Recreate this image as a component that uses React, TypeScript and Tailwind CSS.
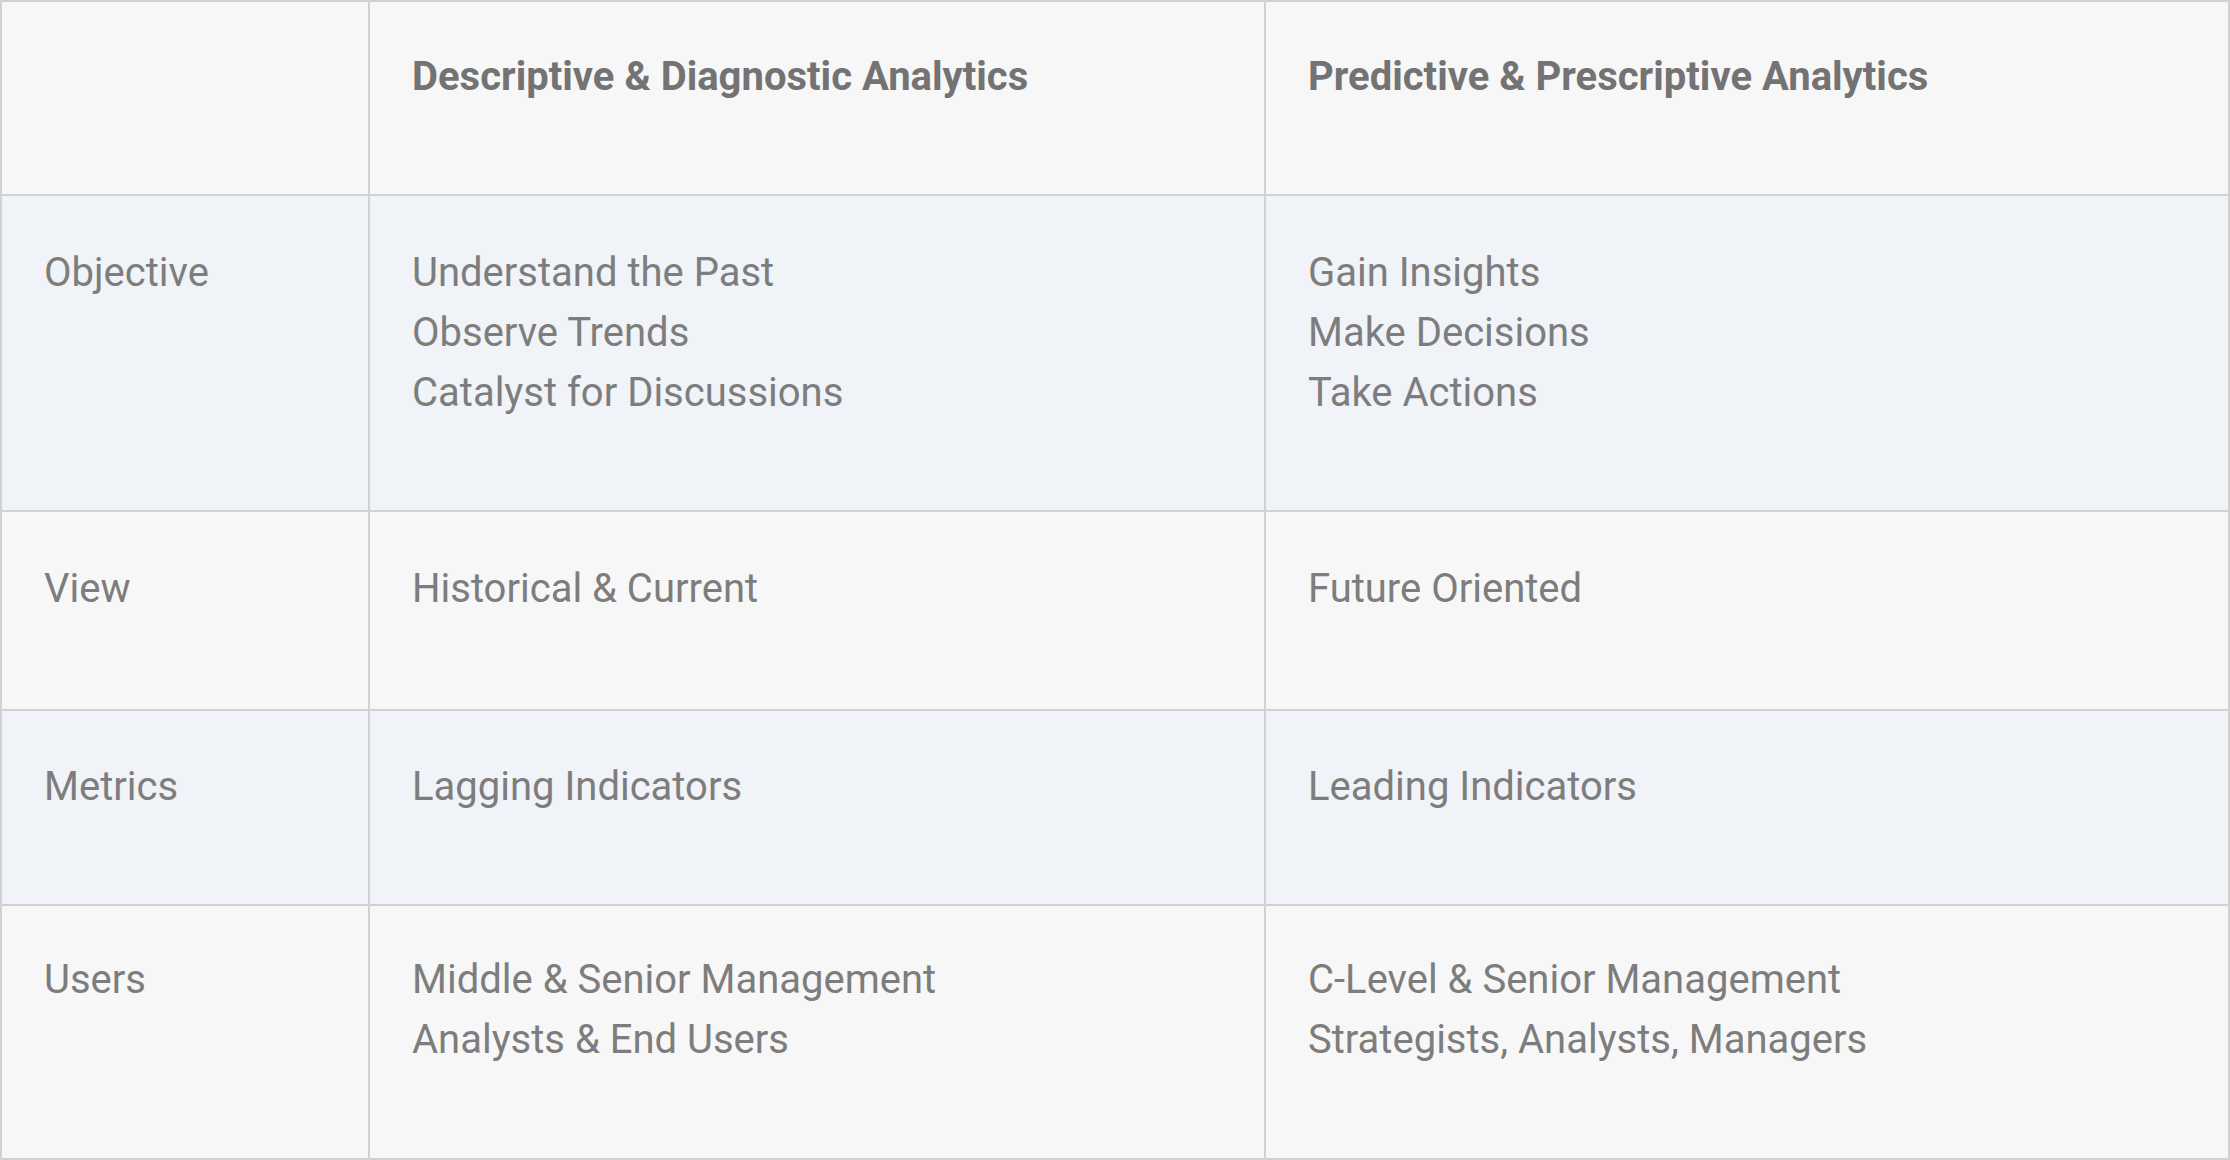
import React from "react";

const rows: { label: string; a: string[]; b: string[]; alt: boolean; pt: string }[] = [
  { label: "Objective", a: ["Understand the Past", "Observe Trends", "Catalyst for Discussions"], b: ["Gain Insights", "Make Decisions", "Take Actions"], alt: true, pt: "pt-[47px]" },
  { label: "View", a: ["Historical & Current"], b: ["Future Oriented"], alt: false, pt: "pt-[47px]" },
  { label: "Metrics", a: ["Lagging Indicators"], b: ["Leading Indicators"], alt: true, pt: "pt-[46px]" },
  { label: "Users", a: ["Middle & Senior Management", "Analysts & End Users"], b: ["C-Level & Senior Management", "Strategists, Analysts, Managers"], alt: false, pt: "pt-[44px]" },
];

function Cell({ lines, alt, bold, pt }: { lines: string[]; alt: boolean; bold?: boolean; pt: string }) {
  return (
    <div className={`${alt ? "bg-[#f0f3f8]" : "bg-[#f7f7f7]"} pl-[42px] ${pt}`}>
      {lines.map((l) => (
        <div
          key={l}
          className={`text-[40px] leading-[60px] whitespace-nowrap ${bold ? "font-bold text-[#737373]" : "text-[#7d7d7d]"}`}
        >
          {l}
        </div>
      ))}
    </div>
  );
}

export default function App() {
  return (
    <div
      className="w-[2230px] h-[1160px] bg-[#d2d2d2] border-2 border-[#d2d2d2] grid grid-cols-[366px_894px_1fr] grid-rows-[192px_314px_197px_193px_1fr] gap-[2px] overflow-hidden"
      style={{ fontFamily: "Roboto, 'Liberation Sans', sans-serif" }}
    >
      <div className="bg-[#f7f7f7]" />
      <Cell lines={["Descriptive & Diagnostic Analytics"]} alt={false} bold pt="pt-[45px]" />
      <Cell lines={["Predictive & Prescriptive Analytics"]} alt={false} bold pt="pt-[45px]" />
      {rows.map((r) => (
        <React.Fragment key={r.label}>
          <Cell lines={[r.label]} alt={r.alt} pt={r.pt} />
          <Cell lines={r.a} alt={r.alt} pt={r.pt} />
          <Cell lines={r.b} alt={r.alt} pt={r.pt} />
        </React.Fragment>
      ))}
    </div>
  );
}
